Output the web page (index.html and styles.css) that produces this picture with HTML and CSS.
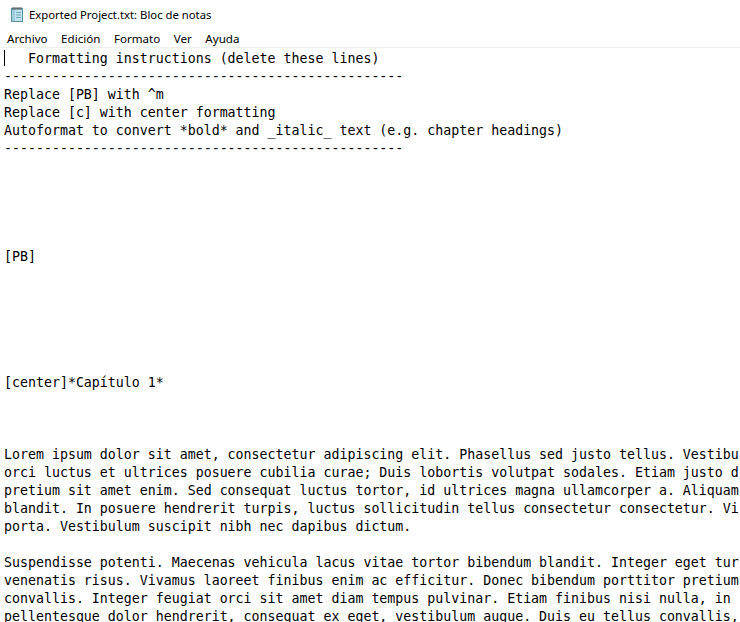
FILE: index.html
```html
<!DOCTYPE html>
<html lang="es">

<head>
    <meta charset="UTF-8">
    <meta name="viewport" content="width=device-width, initial-scale=1.0">
    <title>Exported Project.txt: Bloc de notas</title>
    <link rel="stylesheet" href="styles.css">
</head>

<body>
    <div class="window">
        <div class="titlebar">
            <svg class="app-icon" width="16" height="16" viewBox="0 0 16 16">
                <rect x="2.5" y="2.5" width="11" height="13" fill="#bfe3ee" stroke="#5a8fa3" stroke-width="1"/>
                <rect x="3" y="3" width="3" height="12" fill="#9fd0e0"/>
                <line x1="7" y1="6.5" x2="12" y2="6.5" stroke="#6fa6b8" stroke-width="1"/>
                <line x1="7" y1="9" x2="12" y2="9" stroke="#6fa6b8" stroke-width="1"/>
                <line x1="7" y1="11.5" x2="12" y2="11.5" stroke="#6fa6b8" stroke-width="1"/>
                <path d="M4 1v3M6 1v3M8 1v3M10 1v3M12 1v3" stroke="#555" stroke-width="1"/>
            </svg>
            <span class="title">Exported Project.txt: Bloc de notas</span>
        </div>
        <ul class="menubar">
            <li>Archivo</li>
            <li>Edición</li>
            <li>Formato</li>
            <li>Ver</li>
            <li>Ayuda</li>
        </ul>
        <pre class="editor"><span class="caret"></span>   Formatting instructions (delete these lines)
--------------------------------------------------
Replace [PB] with ^m
Replace [c] with center formatting
Autoformat to convert *bold* and _italic_ text (e.g. chapter headings)
--------------------------------------------------





[PB]






[center]*Capítulo 1*



Lorem ipsum dolor sit amet, consectetur adipiscing elit. Phasellus sed justo tellus. Vestibu
orci luctus et ultrices posuere cubilia curae; Duis lobortis volutpat sodales. Etiam justo d
pretium sit amet enim. Sed consequat luctus tortor, id ultrices magna ullamcorper a. Aliquam
blandit. In posuere hendrerit turpis, luctus sollicitudin tellus consectetur consectetur. Vi
porta. Vestibulum suscipit nibh nec dapibus dictum.

Suspendisse potenti. Maecenas vehicula lacus vitae tortor bibendum blandit. Integer eget tur
venenatis risus. Vivamus laoreet finibus enim ac efficitur. Donec bibendum porttitor pretium
convallis. Integer feugiat orci sit amet diam tempus pulvinar. Etiam finibus nisi nulla, in
pellentesque dolor hendrerit, consequat ex eget, vestibulum augue. Duis eu tellus convallis,</pre>
    </div>
</body>

</html>
```

FILE: styles.css
```css
* {
    margin: 0;
    padding: 0;
    box-sizing: border-box;
}

body {
    background: #fff;
    overflow: hidden;
}

.window {
    width: 740px;
    height: 622px;
    overflow: hidden;
}

.titlebar {
    height: 28px;
    display: flex;
    align-items: center;
    padding-left: 9px;
    font-family: "Noto Sans", sans-serif;
    font-size: 11.3px;
    color: #000;
}

.app-icon {
    margin-right: 4px;
}

.menubar {
    height: 20px;
    padding-top: 2px;
    display: flex;
    align-items: center;
    list-style: none;
    font-family: "Noto Sans", sans-serif;
    font-size: 11.6px;
    color: #000;
    border-bottom: 1px solid #f0f0f0;
}

.menubar li {
    padding: 0 6.5px 0 7px;
}

.editor {
    padding: 2px 0 0 4px;
    font-family: "DejaVu Sans Mono", monospace;
    font-size: 13.28px;
    line-height: 18px;
    color: #000;
    white-space: pre;
    overflow: hidden;
}

.caret {
    display: inline-block;
    width: 1px;
    height: 16px;
    margin-right: -1px;
    background: #000;
    vertical-align: -3px;
}
```
